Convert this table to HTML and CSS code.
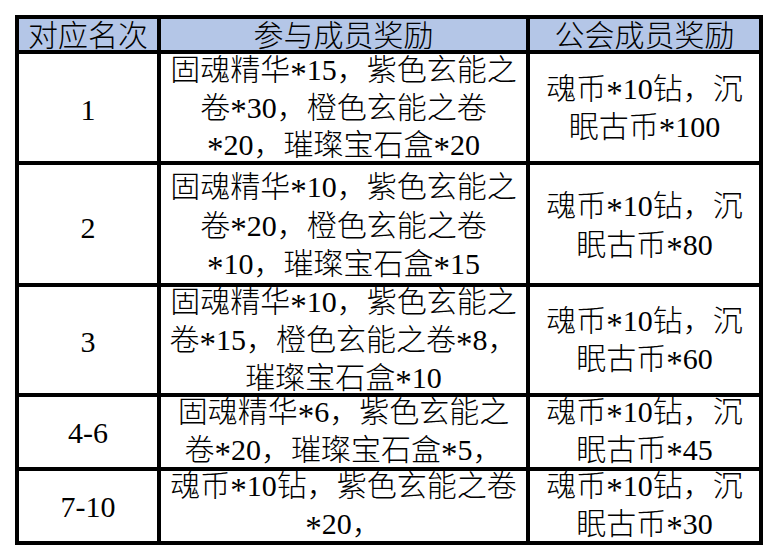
FILE: index.html
```html
<!DOCTYPE html>
<html lang="zh">
<head>
<meta charset="utf-8">
<title>奖励表</title>
<link rel="stylesheet" href="styles.css">
</head>
<body>
<div class="sheet">
  <div class="cell head"><p class="txt">对应名次</p></div>
  <div class="cell head"><p class="txt">参与成员奖励</p></div>
  <div class="cell head"><p class="txt">公会成员奖励</p></div>

  <div class="cell"><p class="txt">1</p></div>
  <div class="cell"><p class="txt">固魂精华<span class="ast">*</span>15，紫色玄能之<br>卷<span class="ast">*</span>30，橙色玄能之卷<br><span class="ast">*</span>20，璀璨宝石盒<span class="ast">*</span>20</p></div>
  <div class="cell"><p class="txt">魂币<span class="ast">*</span>10钻，沉<br>眠古币<span class="ast">*</span>100</p></div>

  <div class="cell roomy"><p class="txt">2</p></div>
  <div class="cell roomy"><p class="txt">固魂精华<span class="ast">*</span>10，紫色玄能之<br>卷<span class="ast">*</span>20，橙色玄能之卷<br><span class="ast">*</span>10，璀璨宝石盒<span class="ast">*</span>15</p></div>
  <div class="cell roomy"><p class="txt">魂币<span class="ast">*</span>10钻，沉<br>眠古币<span class="ast">*</span>80</p></div>

  <div class="cell"><p class="txt">3</p></div>
  <div class="cell"><p class="txt">固魂精华<span class="ast">*</span>10，紫色玄能之<br>卷<span class="ast">*</span>15，橙色玄能之卷<span class="ast">*</span>8，<br>璀璨宝石盒<span class="ast">*</span>10</p></div>
  <div class="cell"><p class="txt">魂币<span class="ast">*</span>10钻，沉<br>眠古币<span class="ast">*</span>60</p></div>

  <div class="cell short"><p class="txt">4-6</p></div>
  <div class="cell short"><p class="txt">固魂精华<span class="ast">*</span>6，紫色玄能之<br>卷<span class="ast">*</span>20，璀璨宝石盒<span class="ast">*</span>5，</p></div>
  <div class="cell short"><p class="txt">魂币<span class="ast">*</span>10钻，沉<br>眠古币<span class="ast">*</span>45</p></div>

  <div class="cell short"><p class="txt">7-10</p></div>
  <div class="cell short"><p class="txt">魂币<span class="ast">*</span>10钻，紫色玄能之卷<br><span class="ast">*</span>20，</p></div>
  <div class="cell short"><p class="txt">魂币<span class="ast">*</span>10钻，沉<br>眠古币<span class="ast">*</span>30</p></div>
</div>
</body>
</html>
```
FILE: styles.css
```css
html, body {
  margin: 0;
  padding: 0;
  background: #ffffff;
}

body {
  padding: 15px 0 0 15px;
  font-family: "Liberation Serif", "Noto Sans CJK SC", serif;
  font-size: 30px;
  color: #000000;
}

.sheet {
  display: grid;
  grid-template-columns: 138px 365px 229px;
  grid-template-rows: 31px 107px 118px 106px 70px 70px;
  gap: 4px;
  padding: 4px;
  background: #000000;
  width: max-content;
}

.cell {
  background: #ffffff;
  display: flex;
  align-items: center;
  justify-content: center;
}

.txt {
  margin: 0;
  padding-top: 4px;
  text-align: center;
  line-height: 34px;
  white-space: nowrap;
  font-weight: 300;
}

.cell.roomy .txt {
  line-height: 35px;
  padding-top: 6px;
}

.cell.short .txt {
  line-height: 34px;
  padding-top: 2px;
}

.cell.head {
  background: #b4c6e7;
}

.cell.head .txt {
  line-height: 28px;
  padding-top: 3px;
}

.ast {
  display: inline-block;
  line-height: 1;
  font-size: 1.1em;
  vertical-align: -0.15em;
}
```
